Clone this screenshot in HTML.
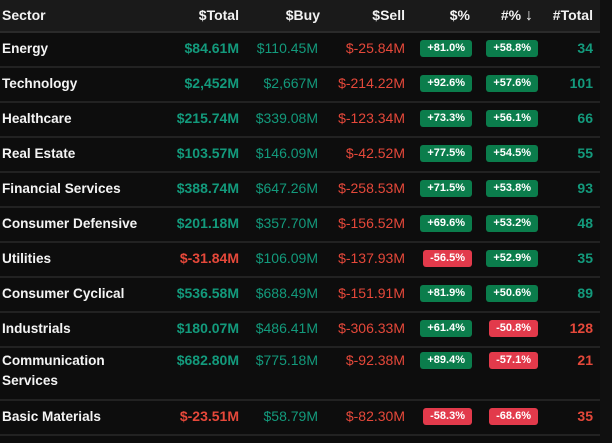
<!DOCTYPE html>
<html><head><meta charset="utf-8"><style>
body{margin:0;width:612px;height:443px;background:#101010;font-family:"Liberation Sans",sans-serif;overflow:hidden;position:relative}
.tbl{position:absolute;left:0;top:0;width:600px;height:443px;background:#0d0d0d}
.hd{position:absolute;left:0;top:0;width:600px;height:31px;background:#1a1a1a;border-bottom:2px solid #2a2a2a;color:#f2f2f2;font-weight:bold;font-size:14px}
.row{position:absolute;left:0;width:600px;border-bottom:2px solid #222;color:#fff;font-size:14px}
.c{position:absolute;white-space:nowrap}
.s{left:2px;font-weight:bold;color:#f4f4f4;font-size:13.6px}
.g{color:#139a7c}.r{color:#e5483a}
.b{font-weight:bold}
.p{position:absolute;height:17px;line-height:17px;font-size:11px;font-weight:bold;color:#fff;border-radius:3px;padding:0 7px}
.pg{background:#0b7d4c}.pr{background:#e23a4b}
</style></head><body><div class="tbl">
<div class="hd">
<span class="c" style="left:2px;top:7px">Sector</span>
<span class="c" style="right:361px;top:7px">$Total</span>
<span class="c" style="right:280px;top:7px">$Buy</span>
<span class="c" style="right:195px;top:7px">$Sell</span>
<span class="c" style="right:130px;top:7px">$%</span>
<span class="c" style="right:67px;top:7px">#% <span style="font-size:16px">↓</span></span>
<span class="c" style="right:7px;top:7px">#Total</span>
</div>
<div id="rows"></div>
</div>
<script>
var d=[["Energy","$84.61M",1,"$110.45M","$-25.84M","+81.0%",1,"+58.8%",1,"34",1],
["Technology","$2,452M",1,"$2,667M","$-214.22M","+92.6%",1,"+57.6%",1,"101",1],
["Healthcare","$215.74M",1,"$339.08M","$-123.34M","+73.3%",1,"+56.1%",1,"66",1],
["Real Estate","$103.57M",1,"$146.09M","$-42.52M","+77.5%",1,"+54.5%",1,"55",1],
["Financial Services","$388.74M",1,"$647.26M","$-258.53M","+71.5%",1,"+53.8%",1,"93",1],
["Consumer Defensive","$201.18M",1,"$357.70M","$-156.52M","+69.6%",1,"+53.2%",1,"48",1],
["Utilities","$-31.84M",0,"$106.09M","$-137.93M","-56.5%",0,"+52.9%",1,"35",1],
["Consumer Cyclical","$536.58M",1,"$688.49M","$-151.91M","+81.9%",1,"+50.6%",1,"89",1],
["Industrials","$180.07M",1,"$486.41M","$-306.33M","+61.4%",1,"-50.8%",0,"128",0],
["Communication<br>Services","$682.80M",1,"$775.18M","$-92.38M","+89.4%",1,"-57.1%",0,"21",0],
["Basic Materials","$-23.51M",0,"$58.79M","$-82.30M","-58.3%",0,"-68.6%",0,"35",0]];
var h="",y=33;
d.forEach(function(r,i){var c=(i==9);var H=c?51:33;var t=c?4:7;var st=c?3:6;
h+='<div class="row" style="top:'+y+'px;height:'+H+'px">'+
'<span class="c s" style="top:'+st+'px;line-height:20px">'+r[0]+'</span>'+
'<span class="c b '+(r[2]?'g':'r')+'" style="right:361px;top:'+t+'px;line-height:17px">'+r[1]+'</span>'+
'<span class="c g" style="right:282px;top:'+t+'px;line-height:17px">'+r[3]+'</span>'+
'<span class="c r" style="right:195px;top:'+t+'px;line-height:17px">'+r[4]+'</span>'+
'<span class="p '+(r[6]?'pg':'pr')+'" style="right:128px;top:'+t+'px">'+r[5]+'</span>'+
'<span class="p '+(r[8]?'pg':'pr')+'" style="right:62px;top:'+t+'px">'+r[7]+'</span>'+
'<span class="c b '+(r[10]?'g':'r')+'" style="right:7px;top:'+t+'px;line-height:17px">'+r[9]+'</span></div>';
y+=H+2;});
document.getElementById("rows").innerHTML=h;
</script>
</body></html>
